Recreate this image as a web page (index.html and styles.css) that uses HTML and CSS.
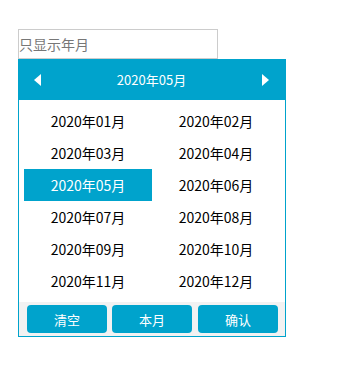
FILE: index.html
```html
<!DOCTYPE html>
<html lang="zh">
<head>
<meta charset="utf-8">
<link rel="stylesheet" href="styles.css">
</head>
<body>
<div class="wrap">
  <input class="field" type="text" placeholder="只显示年月">
  <div class="picker">
    <div class="head">
      <span class="arrow arrow-left"></span>
      <span class="title">2020年05月</span>
      <span class="arrow arrow-right"></span>
    </div>
    <div class="months">
      <div class="month">2020年01月</div>
      <div class="month">2020年02月</div>
      <div class="month">2020年03月</div>
      <div class="month">2020年04月</div>
      <div class="month active">2020年05月</div>
      <div class="month">2020年06月</div>
      <div class="month">2020年07月</div>
      <div class="month">2020年08月</div>
      <div class="month">2020年09月</div>
      <div class="month">2020年10月</div>
      <div class="month">2020年11月</div>
      <div class="month">2020年12月</div>
    </div>
    <div class="foot">
      <button class="btn">清空</button>
      <button class="btn">本月</button>
      <button class="btn">确认</button>
    </div>
  </div>
</div>
</body>
</html>
```
FILE: styles.css
```css
html, body {
  margin: 0;
  padding: 0;
  background: #fff;
}
body {
  font-family: "Noto Sans CJK SC", "Noto Sans", sans-serif;
}
.wrap {
  padding: 29px 0 0 18px;
}
.field {
  display: block;
  box-sizing: border-box;
  width: 200px;
  height: 30px;
  margin: 0;
  padding: 0;
  border: 1px solid #cccccc;
  outline: none;
  font-family: inherit;
  font-size: 14px;
  color: #333;
}
.field::placeholder {
  color: #777;
}
.picker {
  box-sizing: border-box;
  width: 268px;
  border: 1px solid #00a3cc;
  background: #fff;
}
.head {
  height: 40px;
  background: #00a3cc;
  display: flex;
  align-items: center;
  justify-content: space-between;
  padding: 0 16px 0 15px;
  color: #fff;
}
.title {
  font-size: 13px;
  line-height: 40px;
}
.arrow {
  width: 0;
  height: 0;
  border-top: 6.5px solid transparent;
  border-bottom: 6.5px solid transparent;
}
.arrow-left {
  border-right: 7px solid #fff;
}
.arrow-right {
  border-left: 7px solid #fff;
}
.months {
  display: grid;
  grid-template-columns: 128px 128px;
  grid-auto-rows: 32px;
  padding: 5px;
}
.month {
  display: flex;
  align-items: center;
  justify-content: center;
  font-size: 14px;
  color: #000;
}
.month.active {
  background: #00a3cc;
  color: #fff;
}
.foot {
  height: 34px;
  box-sizing: border-box;
  background: #f2f2f2;
  display: flex;
  align-items: center;
  gap: 5px;
  padding: 0 7px 0 8px;
}
.btn {
  width: 80px;
  height: 28px;
  border: none;
  border-radius: 4px;
  background: #00a3cc;
  color: #fff;
  font-family: inherit;
  font-size: 13px;
  padding: 0;
}
.btn:nth-child(3) {
  margin-left: 1px;
}
```
